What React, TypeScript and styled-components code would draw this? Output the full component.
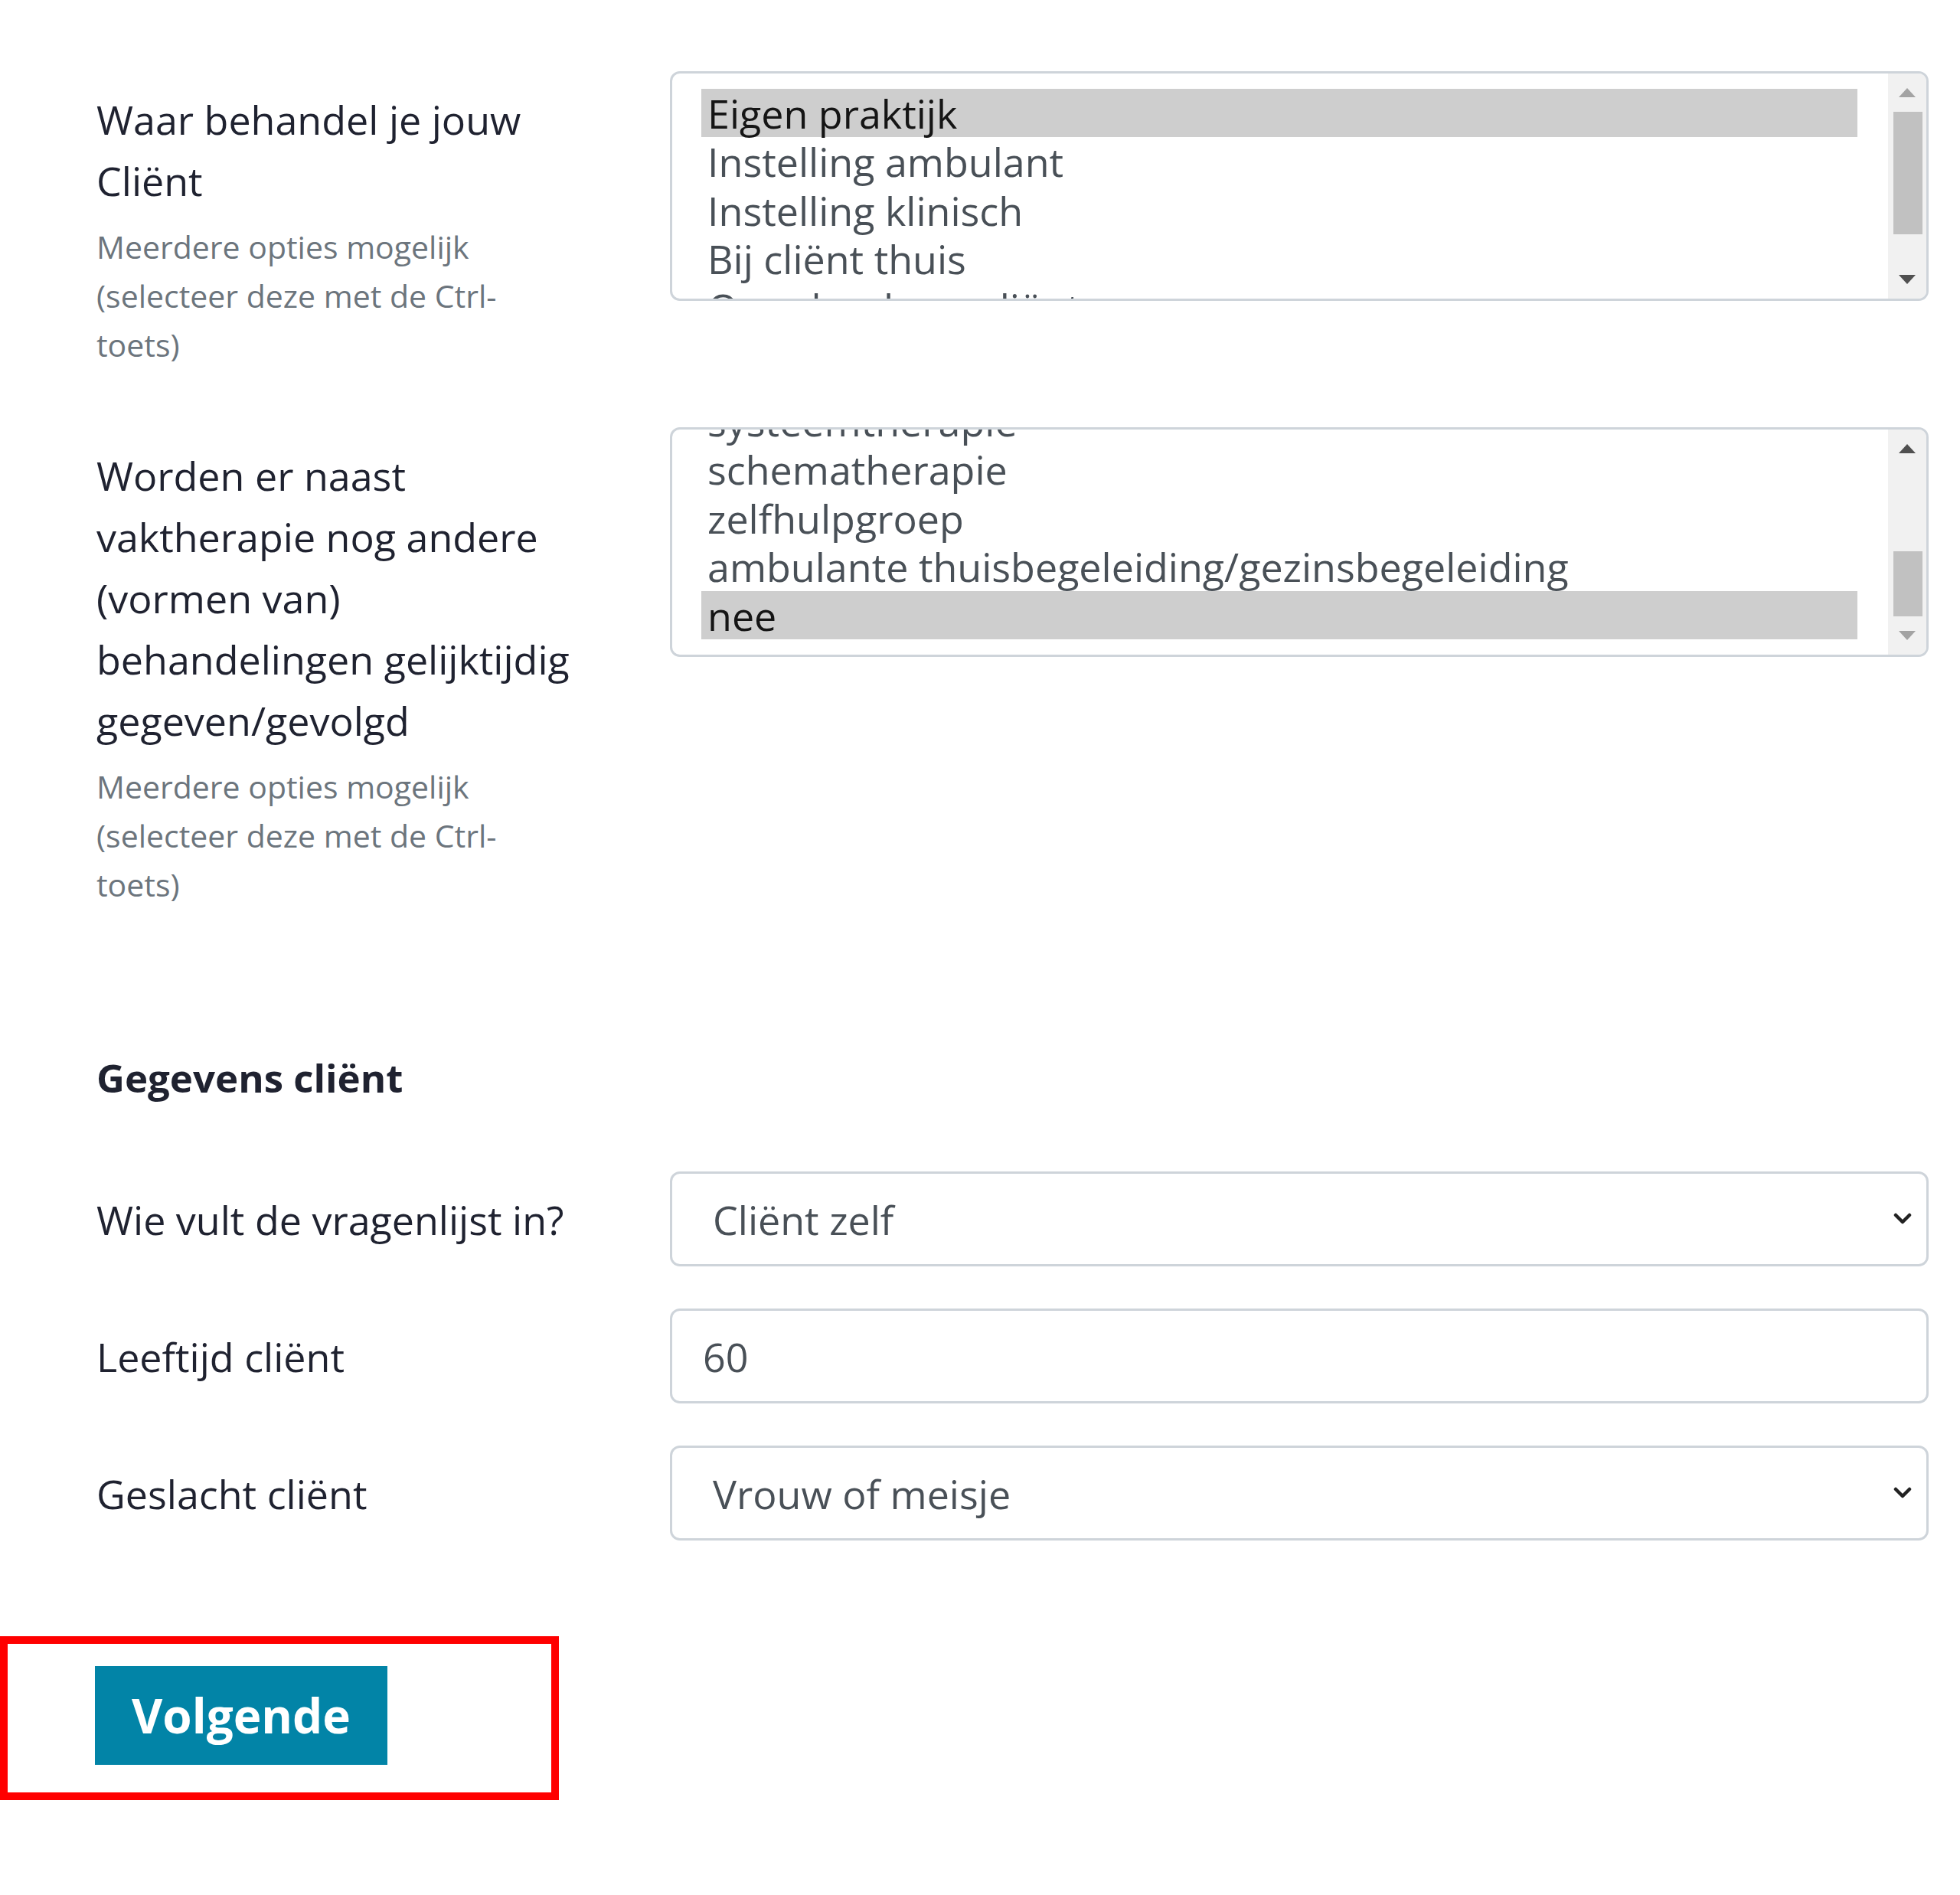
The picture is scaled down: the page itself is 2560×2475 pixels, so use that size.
import React, { useLayoutEffect, useRef } from "react";
import styled, { createGlobalStyle } from "styled-components";

const GlobalStyle = createGlobalStyle`
  html, body {
    margin: 0;
    padding: 0;
    background: #ffffff;
  }
  body {
    font-family: "Open Sans", "Noto Sans", sans-serif;
    color: #212529;
  }
  * { box-sizing: border-box; }
`;

const FONT = 52;
const OPTION_H = 63.4;
const LIST_H = 300;
const BORDER = 3;
const LIST_PAD_Y = 20;
const ARROW_H = 50;

const Page = styled.div`
  width: 2560px;
  min-height: 2475px;
  background: #ffffff;
  padding-top: 93px;
`;

const Form = styled.form`
  padding-left: 126px;
`;

const Row = styled.div`
  display: grid;
  grid-template-columns: 640px 1644px;
  column-gap: 109px;
  align-items: start;
  margin-bottom: 53px;
`;

const LabelCol = styled.div`
  padding: 23px 0;
`;

const Label = styled.label`
  display: block;
  font-size: ${FONT}px;
  line-height: 80px;
  color: #1f2230;
`;

const Hint = styled.small`
  display: block;
  max-width: 605px;
  margin-top: 14px;
  font-size: 41px;
  line-height: 64px;
  color: #6c757d;
`;

const SectionTitle = styled.h5`
  margin: 157px 0 83px;
  font-size: 51px;
  line-height: 80px;
  font-weight: 700;
  color: #1f2230;
`;

/* ---------- multi-select listbox ---------- */

const ListBox = styled.div`
  display: flex;
  height: ${LIST_H}px;
  border: ${BORDER}px solid #ced4da;
  border-radius: 13px;
  overflow: hidden;
  background: #ffffff;
`;

const ListViewport = styled.div`
  flex: 1;
  overflow: hidden;
`;

const OptionList = styled.ul`
  list-style: none;
  margin: 0;
  padding: ${LIST_PAD_Y}px 40px ${LIST_PAD_Y}px 38px;
`;

const Option = styled.li<{ $selected?: boolean }>`
  height: ${OPTION_H}px;
  line-height: ${OPTION_H}px;
  padding: 0 8px;
  font-size: ${FONT}px;
  white-space: nowrap;
  color: ${(p) => (p.$selected ? "#151515" : "#495057")};
  background: ${(p) => (p.$selected ? "#cecece" : "transparent")};
`;

const ScrollBar = styled.div`
  width: 50px;
  flex: none;
  display: flex;
  flex-direction: column;
  background: #f1f1f1;
`;

const ScrollButton = styled.div`
  height: ${ARROW_H}px;
  flex: none;
  display: flex;
  align-items: center;
  justify-content: center;
`;

const ThumbTrack = styled.div`
  flex: 1;
  display: flex;
  flex-direction: column;
`;

const Thumb = styled.div`
  margin: 0 5px 0 7px;
  background: #c1c1c1;
  flex: none;
`;

const Arrow = ({ dir, active }: { dir: "up" | "down"; active: boolean }) => (
  <svg width="22" height="12" viewBox="0 0 22 12">
    <polygon
      points={dir === "up" ? "11,0 22,12 0,12" : "0,0 22,0 11,12"}
      fill={active ? "#505050" : "#a3a3a3"}
    />
  </svg>
);

type MultiProps = {
  options: string[];
  selected: string;
  atBottom?: boolean;
};

const MultiSelect = ({ options, selected, atBottom }: MultiProps) => {
  const ref = useRef<HTMLDivElement>(null);
  const viewportH = LIST_H - BORDER * 2;
  const contentH = LIST_PAD_Y * 2 + options.length * OPTION_H;
  const maxScroll = Math.max(0, contentH - viewportH);
  const scrollTop = atBottom ? maxScroll : 0;
  const trackH = viewportH - ARROW_H * 2;
  const thumbH = Math.round((trackH * viewportH) / contentH);
  const thumbTop = maxScroll ? ((trackH - thumbH) * scrollTop) / maxScroll : 0;

  useLayoutEffect(() => {
    if (ref.current) ref.current.scrollTop = scrollTop;
  }, [scrollTop]);

  return (
    <ListBox role="listbox" aria-multiselectable="true">
      <ListViewport ref={ref}>
        <OptionList>
          {options.map((o) => (
            <Option key={o} $selected={o === selected} role="option" aria-selected={o === selected}>
              {o}
            </Option>
          ))}
        </OptionList>
      </ListViewport>
      <ScrollBar>
        <ScrollButton>
          <Arrow dir="up" active={scrollTop > 0} />
        </ScrollButton>
        <ThumbTrack>
          <Thumb style={{ height: thumbH, marginTop: thumbTop }} />
        </ThumbTrack>
        <ScrollButton>
          <Arrow dir="down" active={scrollTop < maxScroll} />
        </ScrollButton>
      </ScrollBar>
    </ListBox>
  );
};

/* ---------- single controls ---------- */

const SelectWrap = styled.div`
  position: relative;
`;

const NativeSelect = styled.select`
  appearance: none;
  -webkit-appearance: none;
  display: block;
  width: 100%;
  height: 124px;
  margin: 0;
  padding: 0 80px 0 53px;
  border: ${BORDER}px solid #ced4da;
  border-radius: 13px;
  background: #ffffff;
  font-family: inherit;
  font-size: ${FONT}px;
  color: #495057;
  outline: none;
`;

const Chevron = styled.svg`
  position: absolute;
  right: 22px;
  top: 50%;
  margin-top: -8px;
  pointer-events: none;
`;

const TextInput = styled.input`
  display: block;
  width: 100%;
  height: 124px;
  margin: 0;
  padding: 0 40px;
  border: ${BORDER}px solid #ced4da;
  border-radius: 13px;
  background: #ffffff;
  font-family: inherit;
  font-size: ${FONT}px;
  color: #495057;
  outline: none;
`;

const Select = ({ value, options }: { value: string; options: string[] }) => (
  <SelectWrap>
    <NativeSelect defaultValue={value}>
      {options.map((o) => (
        <option key={o} value={o}>
          {o}
        </option>
      ))}
    </NativeSelect>
    <Chevron width="24" height="16" viewBox="0 0 24 16">
      <polyline
        points="3,3 12,12 21,3"
        fill="none"
        stroke="#222222"
        strokeWidth="4.5"
        strokeLinecap="round"
        strokeLinejoin="round"
      />
    </Chevron>
  </SelectWrap>
);

/* ---------- button area ---------- */

const Highlight = styled.div`
  width: 730px;
  margin-top: 123px;
  border: 10px solid #ff0000;
  padding: 29px 0 36px 114px;
`;

const NextButton = styled.button`
  display: block;
  width: 382px;
  height: 129px;
  padding: 0;
  border: none;
  border-radius: 0;
  background: #0284a7;
  color: #ffffff;
  font-family: inherit;
  font-size: 62px;
  font-weight: 700;
  line-height: 129px;
  text-align: center;
`;

const locations = [
  "Eigen praktijk",
  "Instelling ambulant",
  "Instelling klinisch",
  "Bij cliënt thuis",
  "Op school van cliënt",
];

const treatments = [
  "medicatie",
  "psychotherapie",
  "cognitieve gedragstherapie",
  "EMDR",
  "groepstherapie",
  "systeemtherapie",
  "schematherapie",
  "zelfhulpgroep",
  "ambulante thuisbegeleiding/gezinsbegeleiding",
  "nee",
];

export default function App() {
  return (
    <>
      <GlobalStyle />
      <Page>
        <Form onSubmit={(e) => e.preventDefault()}>
          <Row>
            <LabelCol>
              <Label>Waar behandel je jouw Cliënt</Label>
              <Hint>Meerdere opties mogelijk (selecteer deze met de Ctrl-toets)</Hint>
            </LabelCol>
            <MultiSelect options={locations} selected="Eigen praktijk" />
          </Row>

          <Row>
            <LabelCol>
              <Label>
                Worden er naast vaktherapie nog andere (vormen van) behandelingen gelijktijdig
                gegeven/gevolgd
              </Label>
              <Hint>Meerdere opties mogelijk (selecteer deze met de Ctrl-toets)</Hint>
            </LabelCol>
            <MultiSelect options={treatments} selected="nee" atBottom />
          </Row>

          <SectionTitle>Gegevens cliënt</SectionTitle>

          <Row>
            <LabelCol>
              <Label>Wie vult de vragenlijst in?</Label>
            </LabelCol>
            <Select value="Cliënt zelf" options={["Cliënt zelf", "Ouder of verzorger", "Behandelaar"]} />
          </Row>

          <Row>
            <LabelCol>
              <Label>Leeftijd cliënt</Label>
            </LabelCol>
            <TextInput type="text" defaultValue="60" />
          </Row>

          <Row>
            <LabelCol>
              <Label>Geslacht cliënt</Label>
            </LabelCol>
            <Select value="Vrouw of meisje" options={["Vrouw of meisje", "Man of jongen", "Anders"]} />
          </Row>
        </Form>

        <Highlight>
          <NextButton type="button">Volgende</NextButton>
        </Highlight>
      </Page>
    </>
  );
}
